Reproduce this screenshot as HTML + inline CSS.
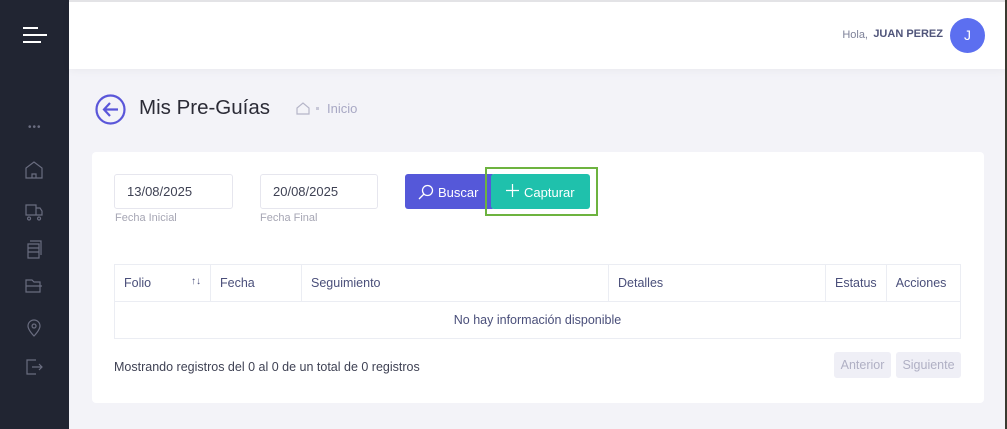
<!DOCTYPE html>
<html><head><meta charset="utf-8"><style>
*{box-sizing:border-box;margin:0;padding:0}
body{width:1007px;height:429px;overflow:hidden;background:#f3f3f8;font-family:"Liberation Sans",sans-serif;position:relative}
.side{position:absolute;left:0;top:0;width:69px;height:429px;background:#212532}
.top{position:absolute;left:69px;top:0;width:936px;height:69px;background:#fff;border-top:2px solid #e3e3e6;box-shadow:0 2px 8px rgba(0,0,0,.04)}
.edge{position:absolute;right:0;top:0;width:2px;height:429px;background:#3a3a30}
.abs{position:absolute}
.card{position:absolute;left:92px;top:152px;width:892px;height:251px;background:#fff;border-radius:4px}
.inp{position:absolute;height:35px;border:1px solid #e6e6ee;border-radius:3px;font-size:13px;color:#3f4254;padding:9px 12px}
.lbl{position:absolute;font-size:11px;color:#a6a6b4}
table{position:absolute;left:114px;top:264px;width:847px;border-collapse:collapse;font-size:12.5px;color:#4a4f7a}
td,th{border:1px solid #ebedf3;font-weight:normal;text-align:left;padding:0 9px;height:37px}
.pg{position:absolute;top:352px;height:26px;background:#efeff6;border-radius:3px;color:#b0b0c4;font-size:12.5px;line-height:26px;text-align:center}
</style></head><body>
<div class="side">
 <div class="abs" style="left:23px;top:27px;width:15px;height:2px;background:#fff"></div>
 <div class="abs" style="left:23px;top:34px;width:24px;height:2px;background:#fff"></div>
 <div class="abs" style="left:23px;top:41px;width:18px;height:2px;background:#fff"></div>
 <div class="abs" style="left:28px;top:122px;color:#6a6d80;font-size:10px;letter-spacing:1px">•••</div>
 <svg class="abs" style="left:24px;top:160px" width="20" height="230" fill="none" stroke="#6a6d80" stroke-width="1.2">
  <path d="M2 18V8l8-6 8 6v10zM8 18v-4h4v4"/>
  <path d="M2 45h10v10H2zM12 48h4l2 3v4h-6M5 57a1.5 1.5 0 1 0 0.1 0M15 57a1.5 1.5 0 1 0 0.1 0"/>
  <path d="M4 84h11v14H4zM6 81h11v14M4 88h11M4 92h11"/>
  <path d="M2 132v-12h6l2 2h6v10zM2 126h16"/>
  <path d="M10 176s-6-6-6-10a6 6 0 0 1 12 0c0 4-6 10-6 10zM10 164a2 2 0 1 0 .1 0"/>
  <path d="M12 200h-9v14h9M8 207h10M15 204l3 3-3 3"/>
 </svg>
</div>
<div class="top">
 <span class="abs" style="right:137px;top:27px;font-size:11px;color:#7e8299">Hola,</span>
 <span class="abs" style="right:62px;top:26px;font-size:11px;font-weight:bold;color:#50557a">JUAN PEREZ</span>
 <div class="abs" style="left:881px;top:16px;width:35px;height:35px;border-radius:50%;background:#5c6ff0;color:#fff;font-size:14px;text-align:center;line-height:35px">J</div>
</div>
<div class="edge"></div>
<svg class="abs" style="left:95px;top:94px" width="32" height="32" fill="none" stroke="#5a56d9" stroke-width="2.2"><circle cx="15.5" cy="15.5" r="14"/><path d="M23 15.5H9M15 9l-6 6.5 6 6.5"/></svg>
<div class="abs" style="left:139px;top:96px;font-size:20.5px;color:#2b2b36">Mis Pre-Guías</div>
<svg class="abs" style="left:296px;top:102px" width="14" height="14" fill="none" stroke="#b5b5c8" stroke-width="1.2"><path d="M1 12V6l6-5 6 5v6zM3 12h8"/></svg>
<div class="abs" style="left:316px;top:107px;width:3px;height:3px;background:#c8c8d8"></div>
<div class="abs" style="left:327px;top:101px;font-size:13px;color:#a8a8c4">Inicio</div>
<div class="card"></div>
<div class="inp" style="left:114px;top:174px;width:119px">13/08/2025</div>
<div class="lbl" style="left:115px;top:212px">Fecha Inicial</div>
<div class="inp" style="left:260px;top:174px;width:118px">20/08/2025</div>
<div class="lbl" style="left:260px;top:212px">Fecha Final</div>
<div class="abs" style="left:405px;top:174px;width:90px;height:35px;background:#5558d9;border-radius:3px;color:#fff;font-size:13px;line-height:38px;padding-left:33px">Buscar</div>
<svg class="abs" style="left:418px;top:184px" width="16" height="16" fill="none" stroke="#fff" stroke-width="1.3"><circle cx="9.5" cy="6.5" r="5"/><path d="M6 10l-5 5"/></svg>
<div class="abs" style="left:491px;top:174px;width:99px;height:35px;background:#1fc1ac;border-radius:3px;color:#fff;font-size:13px;line-height:38px;padding-left:33px">Capturar</div>
<svg class="abs" style="left:506px;top:184px" width="13" height="13" stroke="#fff" stroke-width="1.2"><path d="M6.5 0v13M0 6.5h13"/></svg>
<div class="abs" style="left:485px;top:167px;width:113px;height:49px;border:2px solid #6db33f"></div>
<table>
<tr><th style="width:96px">Folio<span style="float:right;font-size:10px">↑↓</span></th><th style="width:91px">Fecha</th><th style="width:307px">Seguimiento</th><th style="width:217px">Detalles</th><th style="width:52px">Estatus</th><th>Acciones</th></tr>
<tr><td colspan="6" style="text-align:center">No hay información disponible</td></tr>
</table>
<div class="abs" style="left:114px;top:360px;font-size:12.5px;color:#3f4254">Mostrando registros del 0 al 0 de un total de 0 registros</div>
<div class="pg" style="left:834px;width:57px">Anterior</div>
<div class="pg" style="left:896px;width:65px">Siguiente</div>
</body></html>
